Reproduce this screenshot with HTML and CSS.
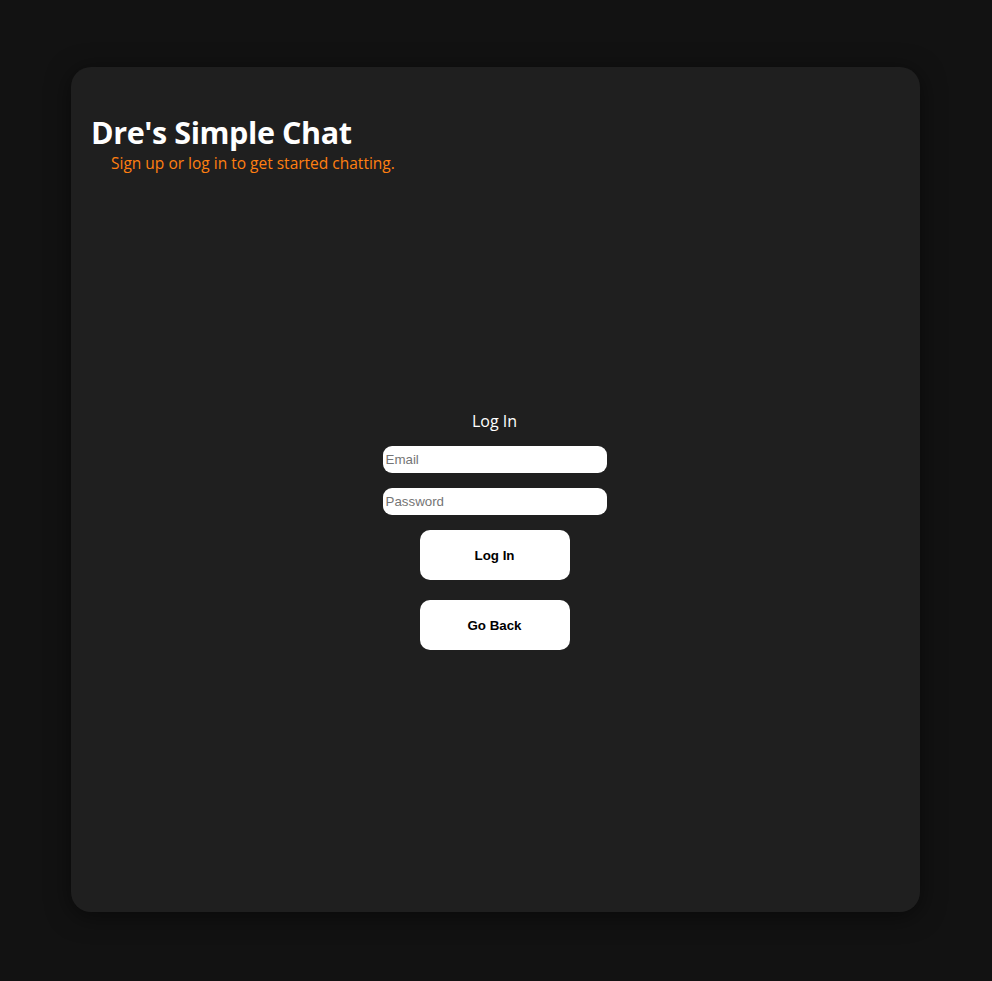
FILE: index.html
```html
<!DOCTYPE html>
<html lang="en">
<head>
<meta charset="utf-8">
<title>Dre's Simple Chat</title>
<link rel="stylesheet" href="styles.css">
</head>
<body>
  <main class="card">
    <header class="header">
      <h1 class="title">Dre's Simple Chat</h1>
      <p class="subtitle">Sign up or log in to get started chatting.</p>
    </header>
    <section class="auth">
      <form class="login-form">
        <h2 class="form-title">Log In</h2>
        <input class="field" type="email" placeholder="Email">
        <input class="field" type="password" placeholder="Password">
        <button class="btn" type="button">Log In</button>
        <button class="btn" type="button">Go Back</button>
      </form>
    </section>
  </main>
</body>
</html>
```

FILE: styles.css
```css
html, body {
  margin: 0;
  padding: 0;
  background: #121212;
}

body {
  padding: 67px 72px 69px 71px;
  font-family: "Open Sans", "Noto Sans", sans-serif;
}

.card {
  box-sizing: border-box;
  height: 845px;
  background: #1f1f1f;
  border-radius: 20px;
  box-shadow: 0 4px 24px rgba(0, 0, 0, 0.5);
  padding: 45px 22px 0 20px;
  display: flex;
  flex-direction: column;
}

.title {
  margin: 0;
  color: #ffffff;
  font-size: 30.5px;
  font-weight: 700;
  line-height: 41px;
  letter-spacing: -0.4px;
}

.subtitle {
  margin: 0 0 0 20px;
  color: #ff7f11;
  font-size: 15.5px;
  line-height: 20px;
}

.auth {
  display: flex;
  justify-content: center;
  padding-top: 236px;
}

.login-form {
  display: flex;
  flex-direction: column;
  align-items: center;
  width: 224px;
}

.form-title {
  margin: 0 0 13px 0;
  color: #ffffff;
  font-size: 16px;
  font-weight: 400;
  line-height: 24px;
}

.field {
  box-sizing: border-box;
  width: 224px;
  height: 27px;
  margin: 0 0 15px 0;
  padding: 0 3px;
  border: none;
  border-radius: 9px;
  background: #ffffff;
  font-family: "Liberation Sans", Arial, sans-serif;
  font-size: 13.333px;
  color: #000;
}

.field::placeholder {
  color: #757575;
}

.btn {
  width: 150px;
  height: 50px;
  margin: 0 0 20px 0;
  border: none;
  border-radius: 10px;
  background: #ffffff;
  color: #000000;
  font-family: "Liberation Sans", Arial, sans-serif;
  font-size: 13.333px;
  font-weight: 700;
}
```
